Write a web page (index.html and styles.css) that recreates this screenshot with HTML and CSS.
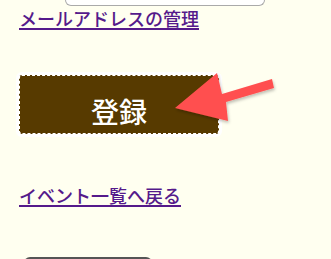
FILE: index.html
```html
<!DOCTYPE html>
<html lang="ja">
<head>
  <meta charset="UTF-8">
  <title>メールアドレスの管理</title>
  <link rel="stylesheet" href="styles.css">
</head>
<body>
  <div class="page">
    <div class="field-tail"></div>
    <a class="nav-link first" href="#">メールアドレスの管理</a>

    <div class="submit-wrap">
      <button class="submit">登録</button>
      <svg class="arrow" width="110" height="56" viewBox="170 70 110 56">
        <defs>
          <filter id="shadow" x="-20%" y="-20%" width="140%" height="140%">
            <feDropShadow dx="1" dy="2" stdDeviation="1.5" flood-color="#000" flood-opacity="0.25"/>
          </filter>
        </defs>
        <polygon filter="url(#shadow)" fill="#ff5050"
                 points="175,107 217,72 222,93 272,78 274,87 226,101 228,120"/>
      </svg>
    </div>

    <a class="nav-link" href="#">イベント一覧へ戻る</a>

    <div class="next-box"></div>
  </div>
</body>
</html>
```

FILE: styles.css
```css
body {
  margin:0;
  background:#fffff0;
  font-family:"Noto Sans CJK JP","Noto Sans",sans-serif;
  overflow:hidden;
}
.page {
  padding:0 19px;
  display:flex;
  flex-direction:column;
  align-items:flex-start;
}
.field-tail {
  margin-left:46px;
  width:198px; height:5px;
  background:#fff;
  border:1px solid #aaa; border-top:none;
  border-radius:0 0 6px 6px;
}
.nav-link {
  font-size:18px;
  font-weight:500;
  line-height:22px;
  color:#551a8b;
  text-decoration:underline;
  text-decoration-thickness:2px;
  text-underline-offset:2px;
}
.nav-link.first { margin-top:1px; }
.submit-wrap {
  position:relative;
  margin:46px 0 50px;
}
.submit {
  display:block;
  width:200px; height:59px;
  padding:12px 0 0;
  background:#573a00;
  color:#fff;
  font-family:inherit;
  font-size:28px;
  font-weight:500;
  border:1px dashed #fff;
  border-radius:3px;
  box-shadow:0 0 0 3px #fff;
}
.arrow {
  position:absolute;
  left:151px; top:-4px;
}
.next-box {
  margin:51px 0 0 5px;
  width:128px; height:20px;
  border-top:2px solid #555;
  border-radius:6px 6px 0 0;
}
```
